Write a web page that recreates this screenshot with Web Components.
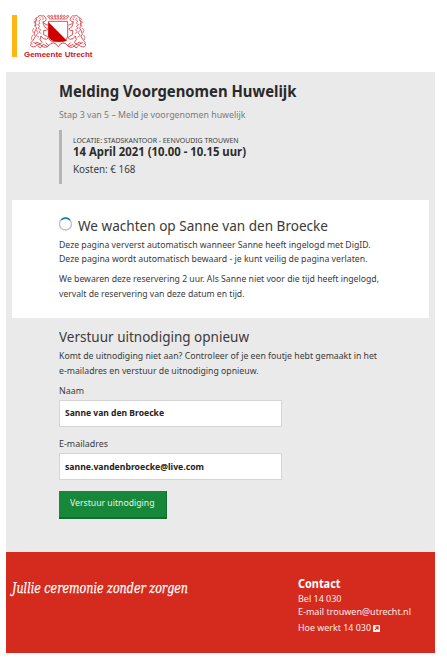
<!DOCTYPE html>
<html lang="nl"><head><meta charset="utf-8"><title>Melding Voorgenomen Huwelijk</title>
<style>
html,body{margin:0;background:#fff}
body{font-family:"Noto Sans","Open Sans",sans-serif;color:#3a3a3a;width:447px;height:664px;overflow:hidden}
</style></head><body><wedding-page></wedding-page>
<script>
const define=(name,html,setup)=>customElements.define(name,class extends HTMLElement{
  connectedCallback(){
    if(this.shadowRoot)return;
    const t=document.createElement('template');t.innerHTML=html;
    this.attachShadow({mode:'open'}).append(t.content.cloneNode(true));
    if(setup)setup(this,this.shadowRoot);
  }
});

/* One line of type. Its bottom edge is the baseline; "fit" sets the drawn width. */
define('text-line',`<style>
:host{display:flex;flex-direction:column;justify-content:flex-end;align-items:flex-start;box-sizing:border-box;padding-bottom:var(--drop,.388em);height:14px}
span{display:block;line-height:0;white-space:nowrap;transform-origin:0 0}
</style><span><slot></slot></span>`,(el,root)=>{
  const s=root.querySelector('span');
  el.style.fontSize=el.getAttribute('size')+'px';
  el.style.height=el.getAttribute('step')+'px';
  const w=s.getBoundingClientRect().width;
  if(w)s.style.transform=`scaleX(${el.getAttribute('fit')/w})`;
});

/* One supporter lion with its half of the ribbon, facing right */
const lion=`<path d="M113 50Q118 44 124 48Q131 45 135 52L138 58L134 64L127 66L134 72L143 76M113 50Q106 54 109 61Q102 66 107 73Q102 80 109 84L104 93Q98 103 105 110L98 121L92 128L97 133M128 68L132 80L142 87L137 92L130 91L130 104L138 108L144 113L139 118L129 116L122 108L119 119L125 127L120 132L109 126L104 132"/>
<path d="M117 53L121 59L115 63L119 70L112 74L119 79L113 84L121 89L116 96L123 101M124 52L130 56L125 61M108 90L114 99L107 106L116 112M109 52L103 58L107 62L100 66L106 72L101 79M101 84Q93 90 99 99M97 105Q91 112 95 121" stroke-width="2.2" opacity=".85"/>
<path d="M91 131Q91 145 106 139Q117 128 125 138Q136 147 145 136L136 128M99 127L111 133M112 137L120 144L129 133L142 140L151 131Q159 126 167 132Q170 138 174 140" stroke-width="2.4"/>`;

define('city-logo',`<style>
:host{display:flex;gap:7px;padding:15.3px 0 0 11.5px;height:72px;box-sizing:border-box;color:#d0141a}
i{width:5px;height:41.5px;background:#ffb612}
.m{display:flex;flex-direction:column;width:70px;margin-top:-1px}
svg{display:block;width:56px;height:35px;margin-left:6px}
text-line{font-family:"Liberation Sans",sans-serif;font-weight:bold;--drop:.347em}
</style><i></i><div class="m">
<svg viewBox="89 42 168 105" fill="none" stroke="#d6262b" stroke-width="2.4">
<path d="M144 64H202V108Q201 120 190 125H155Q144 120 144 108Z" fill="#fff"/>
<path d="M144 66L200 122Q190 125 173 125Q147 125 144 108Z" fill="#cd0000" stroke="none"/>
<path d="M147 57H199M148 57L144 49M157 57L153 49M166 57L163 48M173 57V48M181 57L184 48M190 57L193 49M199 57L203 49" stroke-width="2"/>
<g fill="#fff" stroke-width="2"><circle cx="145" cy="49" r="3"/><circle cx="154" cy="49" r="3"/><circle cx="164" cy="48" r="3"/><circle cx="173" cy="48" r="3"/><circle cx="183" cy="48" r="3"/><circle cx="192" cy="49" r="3"/><circle cx="202" cy="49" r="3"/></g>
<g>${lion}</g><g transform="translate(347 0) scale(-1 1)">${lion}</g>
</svg><text-line size="8" step="8.4" fit="68.5">Gemeente Utrecht</text-line></div>`);

define('booking-summary',`<style>
:host{display:block;box-sizing:border-box;margin-top:11.6px;height:54px;border-left:3px solid #b5b5b5;padding-left:11px}
.b{font-weight:bold;color:#2c2c2c}
</style><text-line size="7.4" step="12.5" fit="165.5">LOCATIE: STADSKANTOOR - EENVOUDIG TROUWEN</text-line>
<text-line class="b" size="11.9" step="13.7" fit="173">14 April 2021 (10.00 - 10.15 uur)</text-line>
<text-line size="10.6" step="16.7" fit="62.5">Kosten: € 168</text-line>`);

define('wait-panel',`<style>
:host{display:block;box-sizing:border-box;margin:16.4px 6px 0;height:118px;background:#fff;padding-left:46.5px}
.h{display:flex;gap:5px}
svg{width:14px;height:14px;margin-top:16.5px}
</style><div class="h"><svg viewBox="0 0 14 14" fill="none" stroke-width="1.5"><circle cx="6.5" cy="7" r="6" stroke="#c3c3c3"/><path d="M2.3 2.7A6 6 0 0 1 10.9 2.9" stroke="#087bc5"/></svg>
<text-line size="15" step="30.6" fit="250">We wachten op Sanne van den Broecke</text-line></div>
<text-line size="9.7" step="17.4" fit="311.5">Deze pagina ververst automatisch wanneer Sanne heeft ingelogd met DigID.</text-line>
<text-line size="9.7" step="14.5" fit="308.5">Deze pagina wordt automatisch bewaard - je kunt veilig de pagina verlaten.</text-line>
<text-line size="9.7" step="20.2" fit="320">We bewaren deze reservering 2 uur. Als Sanne niet voor die tijd heeft ingelogd,</text-line>
<text-line size="9.7" step="14.5" fit="185.5">vervalt de reservering van deze datum en tijd.</text-line>`);

define('form-field',`<style>
:host{display:block}
.box{box-sizing:border-box;width:223.5px;height:27px;margin-top:5px;background:#fff;border:1px solid #d5d5d5;padding-left:5.6px;color:#222;font-weight:bold}
</style><slot name="label"></slot><div class="box"><slot></slot></div>`);

define('action-button',`<style>
:host{display:block;box-sizing:border-box;width:108.5px;height:27.5px;margin-top:11px;background:#17873a;color:#e6f3ea;padding-left:11.5px;border-right:1px solid #0f6e2d;border-bottom:2px solid #0f6e2d}
</style><slot></slot>`);

define('page-footer',`<style>
:host{display:grid;grid-template-columns:286px 1fr;box-sizing:border-box;height:101.5px;background:#d52b1e;color:#fdebe9;padding-left:5.7px}
.s{font-family:"DejaVu Serif Condensed","DejaVu Serif",serif;font-style:italic;--drop:.352em;color:#fff;-webkit-text-stroke:.25px #fff}
.c{color:#fff;font-weight:bold}
.r{display:flex;gap:2.5px}
svg{width:7px;height:7px;margin-top:9.8px}
</style><text-line class="s" size="15.6" step="41.8" fit="176">Jullie ceremonie zonder zorgen</text-line>
<div><text-line class="c" size="11.8" step="36" fit="42.5">Contact</text-line>
<text-line size="9.8" step="14.8" fit="43.5">Bel 14 030</text-line>
<text-line size="9.8" step="13.3" fit="113">E-mail trouwen@utrecht.nl</text-line>
<div class="r"><text-line size="9.8" step="16.6" fit="73" style="width:73px">Hoe werkt 14 030</text-line>
<svg viewBox="0 0 7 7"><rect width="7" height="7" rx=".8" fill="#fff"/><path d="M1.8 5.2L4.8 2.2M2.3 1.9H5.1V4.7" fill="none" stroke="#d52b1e" stroke-width="1.1"/></svg></div></div>`);

define('wedding-page',`<style>
:host{display:block;width:447px}
main{display:flex;flex-direction:column;box-sizing:border-box;width:429px;margin-left:6px;height:479.5px;background:#eaeaea}
.col{padding-left:52.5px}
.t{font-weight:bold;color:#292929}.m{color:#7a7a7a}
page-footer{width:429px;margin-left:6px}
</style><city-logo></city-logo>
<main><div class="col"><text-line class="t" size="16.2" step="25.3" fit="237.5">Melding Voorgenomen Huwelijk</text-line>
<text-line class="m" size="9.7" step="21" fit="186.5">Stap 3 van 5 – Meld je voorgenomen huwelijk</text-line>
<booking-summary></booking-summary></div>
<wait-panel></wait-panel>
<div class="col"><text-line size="15" step="24" fit="190">Verstuur uitnodiging opnieuw</text-line>
<text-line size="9.7" step="17.5" fit="318">Komt de uitnodiging niet aan? Controleer of je een foutje hebt gemaakt in het</text-line>
<text-line size="9.7" step="14.6" fit="199.5">e-mailadres en verstuur de uitnodiging opnieuw.</text-line>
<form-field><text-line slot="label" size="9.7" step="20.2" fit="25">Naam</text-line><text-line size="9.5" step="16" fit="99">Sanne van den Broecke</text-line></form-field>
<form-field><text-line slot="label" size="9.7" step="21.6" fit="49">E-mailadres</text-line><text-line size="9.5" step="16.2" fit="139">sanne.vandenbroecke@live.com</text-line></form-field>
<action-button><text-line size="9.7" step="15.9" fit="84.5">Verstuur uitnodiging</text-line></action-button></div></main>
<page-footer></page-footer>`);
</script></body></html>
